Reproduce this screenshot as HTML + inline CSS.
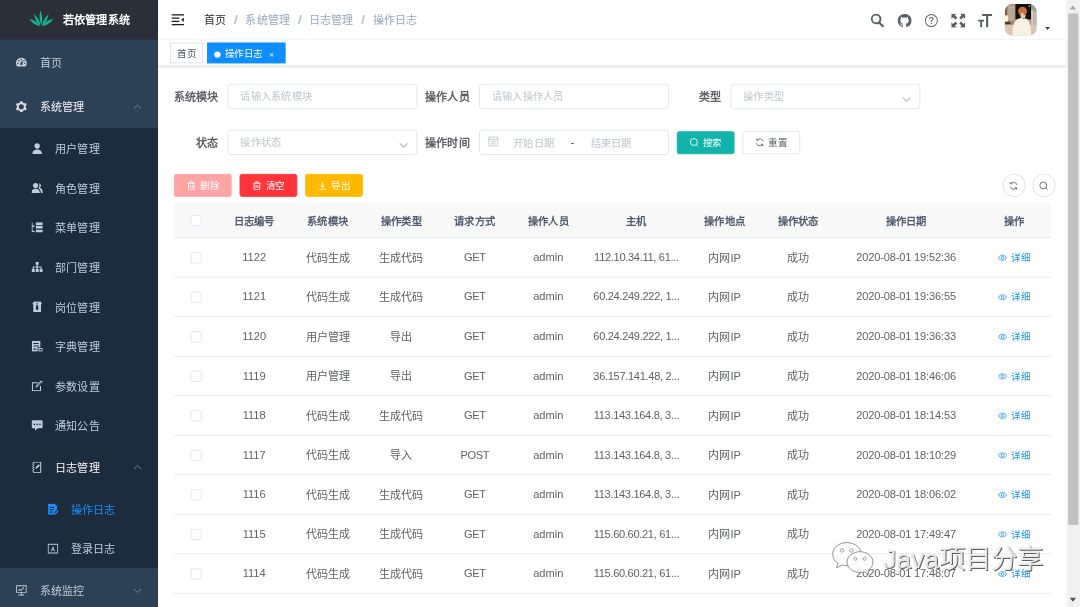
<!DOCTYPE html>
<html lang="zh-CN"><head><meta charset="utf-8"><title>若依管理系统</title>
<style>
html,body{margin:0;padding:0;width:1080px;height:607px;overflow:hidden;background:#fff}
*{box-sizing:border-box}
#app{position:absolute;left:0;top:0;width:1366px;height:768px;transform:scale(0.79063);transform-origin:0 0;overflow:hidden;
 font-family:"Liberation Sans",sans-serif;font-size:14px;color:#303133;background:#fff;-webkit-font-smoothing:antialiased}
svg{display:inline-block}
.ico{width:14px;height:14px;vertical-align:-0.700px;fill:currentColor}
/* ---------- sidebar ---------- */
#side{position:absolute;left:0;top:0;width:200px;height:768px;background:#2c4056;overflow:hidden}
#logo{height:50px;line-height:50px;background:#2b2f3a;text-align:left;padding-left:36px;white-space:nowrap;overflow:hidden}
#logo svg{width:32px;height:32px;vertical-align:middle;margin-right:12px}
#logo b{display:inline-block;color:#fff;font-weight:700;font-size:14px;line-height:49px;height:50px;vertical-align:middle}
.mi{position:relative;height:56px;line-height:60px;padding-left:20px;color:#bfcbd9;font-size:14px;white-space:nowrap}
.mi .ico{margin-right:16px}
.mi.act{color:#f4f4f5}
.mi.act .ico{opacity:.86}
.sub{background:#1d2c3c}
.sub .mi{height:50px;line-height:54px;padding-left:40px}
.sub .mi.t{height:56px;line-height:60px}
.sub .sub .mi{padding-left:60px}
.mi.cur{color:#1890ff}
.arr{position:absolute;right:20px;top:50%;margin-top:-5px;width:12px;height:12px;fill:none;stroke:#909399;stroke-width:1}
/* ---------- navbar ---------- */
#main{position:absolute;left:200px;top:0;width:1149px;height:768px;background:#fff}
#nav{position:relative;height:50px;background:#fff;box-shadow:0 1px 4px rgba(0,21,41,.08)}
#ham{position:absolute;left:15px;top:15px;width:20px;height:20px;fill:#1a1a1a}
#bc{position:absolute;left:58px;top:0;line-height:50px;font-size:14px;white-space:nowrap;color:#97a8be}
#bc b{font-weight:400;color:#303133}
#bc i{display:inline-block;font-style:normal;font-weight:700;color:#c0c4cc;margin:0 9px;width:6.500px;text-align:center;transform:scale(1.350,1.150)}
.rm{position:absolute;top:17px;width:18px;height:18px;fill:#5a5e66}
#ava{position:absolute;left:1071px;top:5px;width:40px;height:40px;border-radius:10px;overflow:hidden}
#caret{position:absolute;left:1121.500px;top:33.500px;width:0;height:0;border:3.700px solid transparent;border-top:4.600px solid #3a3f4a}
/* ---------- tags ---------- */
#tags{position:relative;height:34px;background:#fff;border-bottom:1px solid #d8dce5;box-shadow:0 1px 3px 0 rgba(0,0,0,.12),0 0 3px 0 rgba(0,0,0,.04)}
.tag{position:absolute;top:4px;height:26px;line-height:27.500px;overflow:hidden;border:1px solid #d8dce5;color:#495060;background:#fff;padding:0 8px;font-size:12px;white-space:nowrap}
.tag.on{background:#0f8eff;border-color:#0f8eff;color:#fff}
.tag.on:before{content:"";display:inline-block;width:8px;height:8px;border-radius:50%;background:#fff;margin-right:5px;position:relative;top:0.500px}
.tag .x{display:inline-block;width:16px;text-align:center;font-size:8px;margin-left:4px;vertical-align:0.500px}

/* ---------- content ---------- */
#cont{position:absolute;left:0;top:84px;width:1149px;padding:20px}
.frow{height:36px;margin-bottom:22px;white-space:nowrap;font-size:0}
.fi{display:inline-block;vertical-align:top;margin-right:10px;height:36px;font-size:14px}
.fi label{display:inline-block;width:68px;padding-right:12px;text-align:right;line-height:38px;height:36px;font-weight:700;color:#606266;font-size:14px;vertical-align:top}
.inp{display:inline-block;position:relative;vertical-align:top;margin-top:2px;width:240px;height:32px;line-height:31.200px;border:1px solid #dcdfe6;border-radius:4px;background:#fff;padding:0 15px;font-size:13px;color:#c0c4cc;white-space:nowrap}
.inp .chev{position:absolute;right:10px;top:11.500px;width:13px;height:13px;fill:none;stroke:#b9bec7;stroke-width:1.450}
.inp.date{padding:0 10px}
.inp.date .cal{position:absolute;left:10px;top:6.500px;width:14px;height:14px;fill:none;stroke:#c0c4cc;stroke-width:1.100}
.inp.date span{position:absolute;top:0;text-align:center;width:88px;line-height:34.500px;height:30px;overflow:hidden}
.inp.date em{position:absolute;top:0;left:112px;width:10px;text-align:center;font-style:normal;color:#303133}
.btn{display:inline-block;vertical-align:top;width:73px;text-align:center;overflow:hidden;height:29px;line-height:28.500px;padding:0;border:1px solid #dcdfe6;border-radius:3px;background:#fff;color:#606266;font-size:12px;white-space:nowrap}
.btn svg{width:12px;height:12px;vertical-align:-1.500px;margin-right:5px;fill:none;stroke:currentColor;stroke-width:1.100}
.btn.cyan{background:#12b3ab;border-color:#12b3ab;color:#fff}
.btn.dan{background:#ff353b;border-color:#ff353b;color:#fff}
.btn.dis{background:#ffa4a4;border-color:#ffa4a4;color:#fff}
.btn.warn{background:#ffba00;border-color:#ffba00;color:#fff}
#brow{position:relative;height:29px;margin-bottom:8px;white-space:nowrap;font-size:0}
#brow .btn{margin-right:10px}
.circ{position:absolute;top:0;width:28.500px;height:29px;border:1px solid #dcdfe6;border-radius:50%;background:#fff}
.circ svg{position:absolute;left:7.200px;top:7.500px;width:12px;height:12px;fill:none;stroke:#606266;stroke-width:1.100}
/* ---------- table ---------- */
#tbw{position:relative}
#tbw:before{content:"";position:absolute;left:0;top:0;width:1109px;height:43px;background:#f8f8f9}
#tb{position:relative;width:1109px;border-collapse:separate;border-spacing:0;table-layout:fixed;font-size:14px;color:#606266}
#tb th{height:44px;padding:0 0 1px;background:transparent;color:#515a6e;font-size:13px;font-weight:700;text-align:center;border-bottom:1px solid transparent;white-space:nowrap;overflow:hidden}
#tb td{height:50px;padding:0 0 0.600px;text-align:center;border-bottom:1px solid transparent;white-space:nowrap;overflow:hidden}
.cb{display:inline-block;width:14px;height:14px;border:1px solid #dcdfe6;border-radius:2px;background:#fff;vertical-align:middle}
.lnk{color:#1890ff;font-size:12px;position:relative;top:-0.900px}
.ls{letter-spacing:-0.200px}
.ls2{letter-spacing:-0.400px}
.ls3{letter-spacing:-0.500px}
.hl{position:absolute;left:0;width:1109px;height:1px;background:#dfe6ec}
.lnk svg{width:12px;height:12px;vertical-align:-2px;margin-right:5px;fill:none;stroke:#1890ff;stroke-width:1}
/* ---------- scrollbar + watermark ---------- */
#sb{position:absolute;left:1349px;top:0;width:17px;height:768px;background:#f1f1f1}
#sb i{position:absolute;left:2px;top:17px;width:13px;height:647px;background:#c1c1c1}
#sb b{position:absolute;left:4px;width:0;height:0;border:4.500px solid transparent}
#sb b.u{top:3px;border-bottom:5px solid #a3a3a3}
#sb b.d{bottom:3px;border-top:5px solid #505050}
#wm{position:absolute;left:1117px;top:683px;white-space:nowrap;font-size:33.500px;line-height:50px;color:rgba(255,255,255,.82);
 text-shadow:1px 1px .6px rgba(70,70,70,.85),0 0 1.200px rgba(120,120,120,.55)}
#wmi{position:absolute;left:1049px;top:683px;width:61px;height:46px;overflow:visible}
</style></head>
<body><div id="app">
<div id="side"><div id="logo"><svg viewBox="0 0 32 32"><g fill="#14b493" transform="translate(0,-2.200)"><path d="M16.200 24.200C13.800 18.500 13.600 11 15 5.300c2.600 5.600 3.300 13.100 1.200 18.900z"/><path d="M15.300 24.500C11 21.500 8 16.200 7 9.800c4.200 3.600 7.400 9 8.300 14.700z"/><path d="M17.200 24.500c4.300-3 7.300-8.300 8.300-14.700-4.200 3.600-7.400 9-8.300 14.700z"/><path d="M15 24.900C9.800 24.600 4.500 21.300 1.300 16.200c5.400.700 10.700 4 13.700 8.700z"/><path d="M17.500 24.900c5.200-.3 10.500-3.600 13.700-8.700-5.400.7-10.700 4-13.700 8.700z"/></g></svg><b>若依管理系统</b></div>
<div class="mi "><svg class="ico" viewBox="0.700 0.700 12.600 12.600"><path d="M7 1.5a6.2 6.2 0 0 0-6.2 6.2c0 1.4.5 2.8 1.3 3.8h9.8a6.2 6.2 0 0 0-4.900-10zM7 3a.8.8 0 1 1 0 1.600A.8.8 0 0 1 7 3zM3.100 8.800a.8.8 0 1 1 0-1.600.8.8 0 0 1 0 1.600zm1.200-3a.8.8 0 1 1 0-1.600.8.8 0 0 1 0 1.600zm3.800 3.700a1.300 1.300 0 0 1-2.300-1.100c.2-.6 2.500-3.600 2.700-3.500.3.100-.2 4-.4 4.600zm2-3.700a.8.8 0 1 1 0-1.600.8.8 0 0 1 0 1.600zm.8 3a.8.8 0 1 1 0-1.600.8.8 0 0 1 0 1.600z"/></svg>首页</div>
<div class="mi act"><svg class="ico" viewBox="0.700 0.700 12.600 12.600"><path fill-rule="evenodd" d="M7.00 0.50L7.43 0.51L7.85 0.56L8.27 0.63L8.49 1.45L8.61 2.26L8.91 2.38L9.21 2.52L9.50 2.67L9.78 2.84L10.04 3.03L10.30 3.24L11.07 2.93L11.88 2.72L12.16 3.04L12.40 3.39L12.63 3.75L12.83 4.13L13.01 4.51L13.15 4.91L12.55 5.51L11.91 6.02L11.96 6.35L11.99 6.67L12.00 7.00L11.99 7.33L11.96 7.65L11.91 7.98L12.55 8.49L13.15 9.09L13.01 9.49L12.83 9.87L12.63 10.25L12.40 10.61L12.16 10.96L11.88 11.28L11.07 11.07L10.30 10.76L10.04 10.97L9.78 11.16L9.50 11.33L9.21 11.48L8.91 11.62L8.61 11.74L8.49 12.55L8.27 13.37L7.85 13.44L7.43 13.49L7.00 13.50L6.57 13.49L6.15 13.44L5.73 13.37L5.51 12.55L5.39 11.74L5.09 11.62L4.79 11.48L4.50 11.33L4.22 11.16L3.96 10.97L3.70 10.76L2.93 11.07L2.12 11.28L1.84 10.96L1.60 10.61L1.37 10.25L1.17 9.87L0.99 9.49L0.85 9.09L1.45 8.49L2.09 7.98L2.04 7.65L2.01 7.33L2.00 7.00L2.01 6.67L2.04 6.35L2.09 6.02L1.45 5.51L0.85 4.91L0.99 4.51L1.17 4.13L1.37 3.75L1.60 3.39L1.84 3.04L2.12 2.72L2.93 2.93L3.70 3.24L3.96 3.03L4.22 2.84L4.50 2.67L4.79 2.52L5.09 2.38L5.39 2.26L5.51 1.45L5.73 0.63L6.15 0.56L6.57 0.51zM7 4.100a2.900 2.900 0 1 0 0 5.800 2.900 2.900 0 0 0 0-5.800z"/></svg>系统管理<svg class="arr" viewBox="0 0 12 12"><path d="M1.500 8.200L6 3.800l4.500 4.400"/></svg></div>
<div class="sub">
<div class="mi "><svg class="ico" viewBox="0.700 0.700 12.600 12.600"><circle cx="7" cy="4" r="3"/><path d="M1.500 13c0-3.300 2.400-5 5.500-5s5.500 1.700 5.500 5z"/></svg>用户管理</div>
<div class="mi "><svg class="ico" viewBox="0.700 0.700 12.600 12.600"><circle cx="5.200" cy="4" r="2.900"/><path d="M.3 12.500c0-3 2.100-4.800 4.900-4.800s4.900 1.800 4.900 4.800z"/><path d="M9 1.400a2.700 2.700 0 0 1 .6 5.200c2.400.5 4 2.200 4 5.900h-2.400c0-2.700-1-4.500-2.900-5.300 1.300-1.300 1.700-4 .7-5.800z"/></svg>角色管理</div>
<div class="mi "><svg class="ico" viewBox="0.700 0.700 12.600 12.600"><path d="M.5 1h1.300v3.600H4V6H1.800v4.600H4V12H.5zM5.500 .8h8v3h-8zM5.500 4.800h8v3h-8zM5.500 9.300h8v3h-8z"/></svg>菜单管理</div>
<div class="mi "><svg class="ico" viewBox="0.700 0.700 12.600 12.600"><path d="M5.300 1h3.400v3.200H7.700v1.900h4.400v3H13.500v3.400h-3.700V9.100h1V7.400H7.700v1.700h1v3.400H5.300V9.100h1V7.400H3.200v1.700h1v3.400H.5V9.100h1.400v-3h4.400V4.200H5.300z"/></svg>部门管理</div>
<div class="mi "><svg class="ico" viewBox="0.700 0.700 12.600 12.600"><path fill-rule="evenodd" d="M2.600 1h8.800v12H2.600zM6.200 3h1.600v1.500H6.200zM6 5.300h2l.5 4.200L7 11 5.500 9.500zM1.500 3h1.100v1.200H1.500zM11.400 3h1.100v1.200h-1.100z"/></svg>岗位管理</div>
<div class="mi "><svg class="ico" viewBox="0.700 0.700 12.600 12.600"><path fill-rule="evenodd" d="M1 .8h9.600v7.400H7.400V13H1zM2.800 3.200v1.300h6V3.200zM2.800 6v1.300h6V6zM2.800 9.600v1.200h3V9.600zM8.400 9h5v4h-5zM9.500 10.100v1.800h2.800v-1.800z"/></svg>字典管理</div>
<div class="mi "><svg class="ico" viewBox="0.700 0.700 12.600 12.600"><path d="M1 2.800h6.800v1.200H2.200v8h8V7.200h1.200v6H1zM11.700.6l1.800 1.800-6 6-2.300.6.600-2.400zM11.700 2.300L7 7l-.2.800.8-.2 4.700-4.700z"/></svg>参数设置</div>
<div class="mi "><svg class="ico" viewBox="0.700 0.700 12.600 12.600"><path fill-rule="evenodd" d="M2 1.200h10a1.500 1.500 0 0 1 1.500 1.500v6.200a1.500 1.500 0 0 1-1.500 1.500H7.700L4.600 13.200v-2.800H2a1.500 1.500 0 0 1-1.500-1.500V2.700A1.500 1.500 0 0 1 2 1.200zM3.800 5a.9.9 0 1 0 0 1.800.9.9 0 0 0 0-1.800zM7 5a.9.9 0 1 0 0 1.800A.9.9 0 0 0 7 5zm3.200 0a.9.9 0 1 0 0 1.800.9.9 0 0 0 0-1.800z"/></svg>通知公告</div>
<div class="mi act t"><svg class="ico" viewBox="0.700 0.700 12.600 12.600"><path fill-rule="evenodd" d="M2.400.6h9.200v12.800H2.400zM3.500 1.700v10.600h7V1.700zM1.300 2.800h2v1h-2zM1.300 5.400h2v1h-2zM1.300 8h2v1h-2zM1.300 10.600h2v1h-2zM8.700 3.600l1.300 1.300-3.300 3.400-1.600.4.400-1.700z"/></svg>日志管理<svg class="arr" viewBox="0 0 12 12"><path d="M1.500 8.200L6 3.800l4.500 4.400"/></svg></div>
<div class="sub">
<div class="mi cur"><svg class="ico" viewBox="0.700 0.700 12.600 12.600"><path fill-rule="evenodd" d="M1.500.5h7.200l2.800 2.800v4.200l-3 3.200v2.600H1.500zM3.300 4.300v1.300h5.200V4.300zM3.300 7v1.300h5.200V7zM3.300 9.700v1.300h3.200V9.700zM12.700 8.200l.9.900-3.800 3.900-1.400.4.400-1.400z"/></svg>操作日志</div>
<div class="mi "><svg class="ico" viewBox="0.700 0.700 12.600 12.600"><path fill-rule="evenodd" d="M1 1.500h12v11H1zM2.100 2.600v8.800h9.800V2.600zM4.700 10L7 3.800 9.300 10H8.200l-.4-1.200H6.200L5.800 10zM6.500 7.900h1L7 6.300z"/></svg>登录日志</div>
</div></div>
<div class="mi "><svg class="ico" viewBox="0.700 0.700 12.600 12.600"><path fill-rule="evenodd" d="M.5 1h13v1H13v7.500H7.600v2h2.700v1H3.700v-1h2.700v-2H1V2H.5zM2 2v6.500h10V2zM3 6.800l2-2 1.600 1.300L9.500 3l.7.700-3.500 3.800L5.100 6.200 3.700 7.500z"/></svg>系统监控<svg class="arr" viewBox="0 0 12 12"><path d="M1.500 3.800L6 8.200l4.500-4.400"/></svg></div>
</div>
<div id="main">
<div id="nav">
<svg id="ham" viewBox="0 0 1024 1024"><path d="M112 160h800v72H112zM112 792h800v72H112zM112 370h496v72H112zM112 582h496v72H112zM896 389v246a9 9 0 0 1-14.400 7L725 519a9 9 0 0 1 0-14l156.600-123a9 9 0 0 1 14.400 7z"/></svg>
<div id="bc"><b>首页</b><i>/</i>系统管理<i>/</i>日志管理<i>/</i>操作日志</div>
<svg class="rm" style="left:901px" viewBox="0 0 18 18"><path fill-rule="evenodd" d="M7 .3a6.700 6.700 0 0 1 5.400 10.700l5 5-1.900 1.900-5-5A6.700 6.700 0 1 1 7 .3zm0 2.400a4.300 4.300 0 1 0 0 8.600 4.300 4.300 0 0 0 0-8.600z"/></svg>
<svg class="rm" style="left:935px" viewBox="0 0 18 18"><path d="M9 .8a8.400 8.400 0 0 0-2.700 16.400c.4.100.6-.2.600-.4v-1.600c-2.300.5-2.800-1-2.800-1-.4-1-.9-1.200-.9-1.200-.8-.5 0-.5 0-.5.800.100 1.300.9 1.300.9.700 1.300 2 .9 2.400.7.100-.5.300-.9.500-1.100-1.900-.2-3.800-.9-3.800-4.100 0-.9.300-1.700.9-2.300-.1-.2-.4-1.100.1-2.200 0 0 .7-.2 2.300.9a8 8 0 0 1 4.200 0c1.600-1.100 2.300-.9 2.300-.9.500 1.100.2 2 .1 2.200.5.600.9 1.300.9 2.300 0 3.200-2 3.900-3.800 4.100.3.300.6.800.6 1.600v2.300c0 .2.100.5.600.4A8.400 8.400 0 0 0 9 .8z"/></svg>
<svg class="rm" style="left:969px" viewBox="0 0 18 18"><path fill-rule="evenodd" d="M9 .8a8.200 8.200 0 1 1 0 16.400A8.200 8.200 0 0 1 9 .8zm0 1.200a7 7 0 1 0 0 14 7 7 0 0 0 0-14zM8.300 11.800h1.300v1.400H8.300zM9 4.600c1.700 0 2.800 1 2.800 2.300 0 1-.5 1.600-1.300 2.100-.7.500-.9.800-.9 1.500v.3H8.300v-.4c0-1 .4-1.600 1.200-2.100.7-.5.9-.8.9-1.300 0-.7-.5-1.200-1.400-1.200-.9 0-1.500.5-1.600 1.400H6.100c.1-1.600 1.200-2.600 2.900-2.600z"/></svg>
<svg class="rm" style="left:1003px" viewBox="0 0 18 18"><path d="M.3.3h6.600L4.800 2.400l3 3-2.400 2.400-3-3L.3 6.900zM17.700.3v6.600l-2.100-2.100-3 3-2.400-2.400 3-3L11.100.3zM.3 17.700v-6.600l2.100 2.100 3-3 2.400 2.400-3 3 2.100 2.100zM17.700 17.700h-6.600l2.100-2.100-3-3 2.400-2.400 3 3 2.100-2.100z"/></svg>
<svg class="rm" style="left:1037px" viewBox="0 0 18 18"><path d="M5.300.6h12.500v2.700h-4.900v14.300h-2.700V3.300H5.300zM.2 8h7.600v2.300H5.200v7.300H2.800v-7.300H.2z"/></svg>
<svg id="ava" viewBox="0 0 40 40"><defs><filter id="bl" x="-20%" y="-20%" width="140%" height="140%"><feGaussianBlur stdDeviation="0.800"/></filter></defs>
<rect width="40" height="40" fill="#b5a191"/>
<g filter="url(#bl)">
<rect x="-2" y="-2" width="17" height="30" fill="#9d8a79"/>
<rect x="3.500" y="2" width="9" height="19" fill="#b9a897"/>
<rect x="-2" y="3" width="4.500" height="15" fill="#8a5c40"/>
<rect x="13.400" y="-3" width="20.500" height="22.500" fill="#130d0b"/>
<rect x="33" y="-2" width="10" height="32" fill="#a99a8b"/>
<rect x="33.500" y="8" width="2.500" height="20" fill="#d9d2c8"/>
<rect x="37" y="10" width="2" height="18" fill="#cfc6ba"/>
<rect x="-2" y="26.500" width="44" height="16" fill="#dfc4b2"/>
<rect x="-2" y="14.500" width="6" height="8" fill="#fff3d2"/>
<rect x="-2" y="22.500" width="9" height="3" fill="#4a3a30"/>
<circle cx="30.800" cy="3" r="1" fill="#e8e8e0"/>
<ellipse cx="22.300" cy="9.300" rx="5.600" ry="5.800" fill="#c2733a"/>
<ellipse cx="23" cy="14.800" rx="3.200" ry="3.800" fill="#e9c9b2"/>
<ellipse cx="24.500" cy="12.800" rx="1.300" ry=".8" fill="#5a3a2a"/>
<path d="M9.500 42c0-13 1.500-20 6-22.500l5.500-2 2 2 3-1.500c5 1.500 7.200 9 7.200 24z" fill="#f6f1e3"/>
<circle cx="38.300" cy="5.400" r="1.900" fill="#2fd3cc"/>
</g></svg>
<div id="caret"></div>
</div>
<div id="tags"><div class="tag" style="left:15px;width:42px">首页</div><div class="tag on" style="left:62px;width:99px">操作日志<span class="x">✕</span></div></div>
<div id="cont">
<div class="frow"><div class="fi"><label>系统模块</label><div class="inp">请输入系统模块</div></div><div class="fi"><label>操作人员</label><div class="inp">请输入操作人员</div></div><div class="fi"><label>类型</label><div class="inp">操作类型<svg class="chev" viewBox="0 0 13 13"><path d="M1.500 4.200l5 5 5-5"/></svg></div></div></div>
<div class="frow"><div class="fi"><label>状态</label><div class="inp">操作状态<svg class="chev" viewBox="0 0 13 13"><path d="M1.500 4.200l5 5 5-5"/></svg></div></div><div class="fi"><label>操作时间</label><div class="inp date"><svg class="cal" viewBox="0 0 14 14"><path d="M1.300 1.300h11.400v11.400H1.300zM1.300 4.300h11.400M3.800 7.200h6.400M3.800 9.900h6.400"/></svg><span style="left:24px">开始日期</span><em>-</em><span style="left:122px">结束日期</span></div></div><div class="fi" style="padding-top:3.500px"><div class="btn cyan"><svg viewBox="0 0 12 12"><circle cx="5.600" cy="5.600" r="4.400"/><path d="M8.800 8.800L11 11"/></svg>搜索</div><div class="btn" style="margin-left:10px"><svg viewBox="0 0 12 12"><path d="M10.300 5A4.400 4.400 0 0 0 2.600 3.200M1.700 7a4.400 4.400 0 0 0 7.700 1.800M2.300 1.200v2.300h2.300M9.700 10.800V8.500H7.400"/></svg>重置</div></div></div>
<div id="brow"><div class="btn dis"><svg viewBox="0 0 12 12"><path d="M1.200 2.800h9.600M2.400 2.800v8h7.200v-8M4.300 2.800V.900h3.400v1.900M4.800 4.900v3.900M7.200 4.900v3.900"/></svg>删除</div><div class="btn dan"><svg viewBox="0 0 12 12"><path d="M1.200 2.800h9.600M2.400 2.800v8h7.200v-8M4.300 2.800V.900h3.400v1.900M4.800 4.900v3.900M7.200 4.900v3.900"/></svg>清空</div><div class="btn warn"><svg viewBox="0 0 12 12"><path d="M6 1.500v6.500M3.300 5.400L6 8l2.700-2.600M1.800 10.300h8.400"/></svg>导出</div><div class="circ" style="left:1048px"><svg viewBox="0 0 12 12"><path d="M10.300 5A4.400 4.400 0 0 0 2.600 3.200M1.700 7a4.400 4.400 0 0 0 7.700 1.800M2.300 1.200v2.300h2.300M9.700 10.800V8.500H7.400"/></svg></div><div class="circ" style="left:1086px"><svg viewBox="0 0 12 12"><circle cx="5.600" cy="5.600" r="4.400"/><path d="M8.800 8.800L11 11"/></svg></div></div>
<div id="tbw"><table id="tb"><colgroup><col style="width:55px"><col style="width:93px"><col style="width:93px"><col style="width:93px"><col style="width:93px"><col style="width:93px"><col style="width:130px"><col style="width:93px"><col style="width:93px"><col style="width:180px"><col style="width:93px"></colgroup>
<thead><tr><th><span class="cb"></span></th><th>日志编号</th><th>系统模块</th><th>操作类型</th><th>请求方式</th><th>操作人员</th><th>主机</th><th>操作地点</th><th>操作状态</th><th>操作日期</th><th>操作</th></tr></thead><tbody>
<tr><td><span class="cb"></span></td><td>1122</td><td>代码生成</td><td>生成代码</td><td><span class="ls3">GET</span></td><td>admin</td><td><span class="ls2">112.10.34.11, 61...</span></td><td>内网IP</td><td>成功</td><td><span class="ls">2020-08-01 19:52:36</span></td><td><span class="lnk"><svg viewBox="0 0 12 12"><path d="M.8 6C2 3.900 3.900 2.800 6 2.800s4 1.100 5.200 3.200C10 8.100 8.100 9.200 6 9.200S2 8.100.8 6z"/><circle cx="6" cy="6" r="1.700"/></svg>详细</span></td></tr>
<tr><td><span class="cb"></span></td><td>1121</td><td>代码生成</td><td>生成代码</td><td><span class="ls3">GET</span></td><td>admin</td><td><span class="ls2">60.24.249.222, 1...</span></td><td>内网IP</td><td>成功</td><td><span class="ls">2020-08-01 19:36:55</span></td><td><span class="lnk"><svg viewBox="0 0 12 12"><path d="M.8 6C2 3.900 3.900 2.800 6 2.800s4 1.100 5.200 3.200C10 8.100 8.100 9.200 6 9.200S2 8.100.8 6z"/><circle cx="6" cy="6" r="1.700"/></svg>详细</span></td></tr>
<tr><td><span class="cb"></span></td><td>1120</td><td>用户管理</td><td>导出</td><td><span class="ls3">GET</span></td><td>admin</td><td><span class="ls2">60.24.249.222, 1...</span></td><td>内网IP</td><td>成功</td><td><span class="ls">2020-08-01 19:36:33</span></td><td><span class="lnk"><svg viewBox="0 0 12 12"><path d="M.8 6C2 3.900 3.900 2.800 6 2.800s4 1.100 5.200 3.200C10 8.100 8.100 9.200 6 9.200S2 8.100.8 6z"/><circle cx="6" cy="6" r="1.700"/></svg>详细</span></td></tr>
<tr><td><span class="cb"></span></td><td>1119</td><td>用户管理</td><td>导出</td><td><span class="ls3">GET</span></td><td>admin</td><td><span class="ls2">36.157.141.48, 2...</span></td><td>内网IP</td><td>成功</td><td><span class="ls">2020-08-01 18:46:06</span></td><td><span class="lnk"><svg viewBox="0 0 12 12"><path d="M.8 6C2 3.900 3.900 2.800 6 2.800s4 1.100 5.200 3.200C10 8.100 8.100 9.200 6 9.200S2 8.100.8 6z"/><circle cx="6" cy="6" r="1.700"/></svg>详细</span></td></tr>
<tr><td><span class="cb"></span></td><td>1118</td><td>代码生成</td><td>生成代码</td><td><span class="ls3">GET</span></td><td>admin</td><td><span class="ls2">113.143.164.8, 3...</span></td><td>内网IP</td><td>成功</td><td><span class="ls">2020-08-01 18:14:53</span></td><td><span class="lnk"><svg viewBox="0 0 12 12"><path d="M.8 6C2 3.900 3.900 2.800 6 2.800s4 1.100 5.200 3.200C10 8.100 8.100 9.200 6 9.200S2 8.100.8 6z"/><circle cx="6" cy="6" r="1.700"/></svg>详细</span></td></tr>
<tr><td><span class="cb"></span></td><td>1117</td><td>代码生成</td><td>导入</td><td><span class="ls3">POST</span></td><td>admin</td><td><span class="ls2">113.143.164.8, 3...</span></td><td>内网IP</td><td>成功</td><td><span class="ls">2020-08-01 18:10:29</span></td><td><span class="lnk"><svg viewBox="0 0 12 12"><path d="M.8 6C2 3.900 3.900 2.800 6 2.800s4 1.100 5.200 3.200C10 8.100 8.100 9.200 6 9.200S2 8.100.8 6z"/><circle cx="6" cy="6" r="1.700"/></svg>详细</span></td></tr>
<tr><td><span class="cb"></span></td><td>1116</td><td>代码生成</td><td>生成代码</td><td><span class="ls3">GET</span></td><td>admin</td><td><span class="ls2">113.143.164.8, 3...</span></td><td>内网IP</td><td>成功</td><td><span class="ls">2020-08-01 18:06:02</span></td><td><span class="lnk"><svg viewBox="0 0 12 12"><path d="M.8 6C2 3.900 3.900 2.800 6 2.800s4 1.100 5.200 3.200C10 8.100 8.100 9.200 6 9.200S2 8.100.8 6z"/><circle cx="6" cy="6" r="1.700"/></svg>详细</span></td></tr>
<tr><td><span class="cb"></span></td><td>1115</td><td>代码生成</td><td>生成代码</td><td><span class="ls3">GET</span></td><td>admin</td><td><span class="ls2">115.60.60.21, 61...</span></td><td>内网IP</td><td>成功</td><td><span class="ls">2020-08-01 17:49:47</span></td><td><span class="lnk"><svg viewBox="0 0 12 12"><path d="M.8 6C2 3.900 3.900 2.800 6 2.800s4 1.100 5.200 3.200C10 8.100 8.100 9.200 6 9.200S2 8.100.8 6z"/><circle cx="6" cy="6" r="1.700"/></svg>详细</span></td></tr>
<tr><td><span class="cb"></span></td><td>1114</td><td>代码生成</td><td>生成代码</td><td><span class="ls3">GET</span></td><td>admin</td><td><span class="ls2">115.60.60.21, 61...</span></td><td>内网IP</td><td>成功</td><td><span class="ls">2020-08-01 17:48:07</span></td><td><span class="lnk"><svg viewBox="0 0 12 12"><path d="M.8 6C2 3.900 3.900 2.800 6 2.800s4 1.100 5.200 3.200C10 8.100 8.100 9.200 6 9.200S2 8.100.8 6z"/><circle cx="6" cy="6" r="1.700"/></svg>详细</span></td></tr>
</tbody></table>
<div class="hl" style="top:43px"></div><div class="hl" style="top:93px"></div><div class="hl" style="top:143px"></div><div class="hl" style="top:193px"></div><div class="hl" style="top:243px"></div><div class="hl" style="top:293px"></div><div class="hl" style="top:343px"></div><div class="hl" style="top:393px"></div><div class="hl" style="top:443px"></div><div class="hl" style="top:493px"></div><div class="hl" style="top:543px"></div>
</div></div>
</div>
<div id="sb"><b class="u"></b><i></i><b class="d"></b></div><svg id="wmi" viewBox="0 0 68 56"><g fill="rgba(255,255,255,.85)" stroke="#8f8f8f" stroke-width="1.500"><path d="M24 4C11.500 4 2 12 2 22c0 5.600 3 10.500 8 13.800L8 43l8.500-4.500c2.400.7 5 1 7.500 1 12.500 0 22-8 22-17.500S36.500 4 24 4z"/><path d="M44 18c-11 0-20 7.200-20 16s9 16 20 16c2.300 0 4.500-.3 6.500-.9L58 53l-1.800-6.300C61 43.800 64 39.200 64 34c0-8.800-9-16-20-16z"/></g><g fill="#fff" stroke="#8f8f8f" stroke-width="1.300"><circle cx="16.500" cy="16" r="2.600"/><circle cx="31" cy="16" r="2.600"/><circle cx="37" cy="29" r="2.300"/><circle cx="51" cy="29" r="2.300"/></g></svg><div id="wm">Java项目分享</div>
</div></body></html>
